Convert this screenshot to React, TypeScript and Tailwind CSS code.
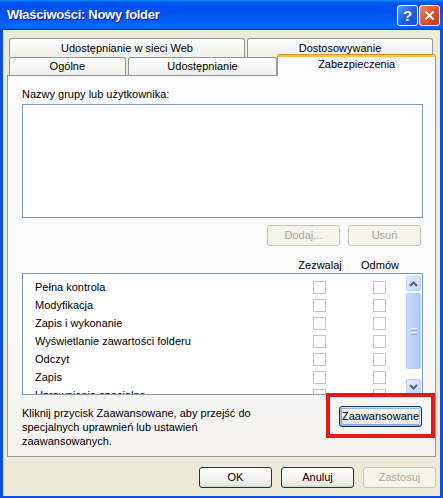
import React from "react";

function Btn({
  children,
  w,
  disabled,
  focused,
}: {
  children: React.ReactNode;
  w: string;
  disabled?: boolean;
  focused?: boolean;
}) {
  if (disabled) {
    return (
      <div
        className={`${w} h-[21px] flex items-center justify-center rounded-[3px] border border-[#c9c7ba] bg-[#f5f4ea] text-[#aca899]`}
      >
        {children}
      </div>
    );
  }
  return (
    <div
      className={`${w} h-[21px] flex items-center justify-center rounded-[3px] border border-[#003c74] bg-[linear-gradient(180deg,#ffffff,#ecebe6_86%,#d6d0c5)] text-black ${
        focused
          ? "shadow-[inset_-1px_1px_#cee7ff,inset_1px_2px_#98b8ea,inset_-2px_2px_#bcd4f6,inset_1px_-1px_#89ade4,inset_2px_-2px_#89ade4]"
          : ""
      }`}
    >
      {children}
    </div>
  );
}

function Check() {
  return <div className="w-[13px] h-[13px] border border-[#c9c7ba] bg-white" />;
}

function Chevron({ up }: { up?: boolean }) {
  return (
    <svg width="9" height="6" viewBox="0 0 9 6">
      <path
        d={up ? "M1 5 L4.5 1.5 L8 5" : "M1 1 L4.5 4.5 L8 1"}
        fill="none"
        stroke="#4d6185"
        strokeWidth="2"
      />
    </svg>
  );
}

const perms = [
  "Pełna kontrola",
  "Modyfikacja",
  "Zapis i wykonanie",
  "Wyświetlanie zawartości folderu",
  "Odczyt",
  "Zapis",
  "Uprawnienia specjalne",
];

export default function App() {
  return (
    <div className="w-[443px] h-[498px] flex flex-col bg-[#0a50dc] font-['Liberation_Sans',Arial,sans-serif] text-[11px] text-black overflow-hidden">
      {/* Title bar */}
      <div className="h-[30px] shrink-0 flex items-center pl-[7px] pr-[3px] bg-[linear-gradient(180deg,#0997ff,#0053ee_8%,#0050ee_40%,#0066ff_88%,#0066ff_93%,#005bff_95%,#003dd7_96%,#003dd7)]">
        <div className="flex-1 text-white font-bold text-[13px] tracking-[-0.3px] [text-shadow:1px_1px_#0f1089]">
          Właściwości: Nowy folder
        </div>
        <div className="flex gap-[1px]">
          <div className="w-[21px] h-[21px] rounded-[3px] border border-white bg-[linear-gradient(135deg,#5a9bff,#2260e0_50%,#1a4fd0)] flex items-center justify-center text-white font-bold text-[15px] leading-none">
            ?
          </div>
          <div className="w-[21px] h-[21px] rounded-[3px] border border-white bg-[linear-gradient(135deg,#f08a60,#e0542c_50%,#c83c14)] flex items-center justify-center">
            <svg width="11" height="11" viewBox="0 0 11 11">
              <path d="M1.5 1.5 L9.5 9.5 M9.5 1.5 L1.5 9.5" stroke="white" strokeWidth="2" />
            </svg>
          </div>
        </div>
      </div>

      {/* Body */}
      <div className="flex-1 mx-[3px] mb-[2px] bg-[#ece9d8] flex flex-col px-[4px] pt-[8px]">
        {/* Tabs row 1 */}
        <div className="flex pl-[2px] gap-[2px] h-[19px]">
          <div className="w-[236px] h-[19px] rounded-t-[3px] border border-b-0 border-[#919b9c] bg-[linear-gradient(180deg,#ffffff,#fafaf9_26%,#f0f0ea_95%,#ecebe6)] flex items-center justify-center">
            Udostępnianie w sieci Web
          </div>
          <div className="w-[186px] h-[19px] rounded-t-[3px] border border-b-0 border-[#919b9c] bg-[linear-gradient(180deg,#ffffff,#fafaf9_26%,#f0f0ea_95%,#ecebe6)] flex items-center justify-center">
            Dostosowywanie
          </div>
        </div>
        {/* Tabs row 2 */}
        <div className="flex items-end pl-[2px] h-[18px]">
          <div className="w-[117px] h-[18px] rounded-t-[3px] border border-b-0 border-[#919b9c] bg-[linear-gradient(180deg,#ffffff,#fafaf9_26%,#f0f0ea_95%,#ecebe6)] flex items-center justify-center">
            Ogólne
          </div>
          <div className="ml-[2px] w-[150px] h-[18px] rounded-t-[3px] border border-b-0 border-[#919b9c] bg-[linear-gradient(180deg,#ffffff,#fafaf9_26%,#f0f0ea_95%,#ecebe6)] flex items-center justify-center">
            Udostępnianie
          </div>
          <div className="relative z-10 w-[159px] h-[22px] -mb-[1px] rounded-t-[3px] border-x border-t border-[#919b9c] border-t-[#e68b2c] bg-[#fcfcfe] flex flex-col">
            <div className="h-[2px] bg-[#ffc73c] shrink-0" />
            <div className="flex-1 flex justify-center pt-[1px] leading-[13px]">Zabezpieczenia</div>
          </div>
        </div>

        {/* Panel */}
        <div className="h-[382px] w-[429px] border border-[#919b9c] bg-[linear-gradient(180deg,#fcfcfe,#fbfbfa_60%,#f4f3ee)] pt-[12px] pl-[14px]">
          <div className="w-[402px] flex flex-col">
            <div className="leading-[13px]">Nazwy grupy lub użytkownika:</div>
            <div className="mt-[3px] h-[114px] w-[401px] border border-[#7f9db9] bg-white" />
            <div className="mt-[7px] flex justify-end gap-[8px] pr-[3px]">
              <Btn w="w-[73px]" disabled>
                Dodaj...
              </Btn>
              <Btn w="w-[73px]" disabled>
                Usuń
              </Btn>
            </div>
            <div className="mt-[13px] h-[13px] leading-[13px] flex pl-[268px]">
              <div className="w-[60px] text-center">Zezwalaj</div>
              <div className="w-[60px] text-center">Odmów</div>
            </div>
            <div className="mt-[1px] h-[122px] w-[401px] border border-[#7f9db9] bg-white flex overflow-hidden">
              <div className="flex-1 pt-[4px] flex flex-col">
                {perms.map((p) => (
                  <div key={p} className="h-[18px] shrink-0 flex items-center">
                    <div className="w-[290px] pl-[12px]">{p}</div>
                    <Check />
                    <div className="ml-[47px]">
                      <Check />
                    </div>
                  </div>
                ))}
              </div>
              <div className="w-[17px] flex flex-col pt-[2px] px-[1px] pb-[0px] gap-[2px] bg-[#fdfdfb]">
                <div className="h-[15px] shrink-0 rounded-[2px] border border-[#bad0fd] bg-[linear-gradient(135deg,#e6eefc,#c1d3fb)] flex items-center justify-center">
                  <Chevron up />
                </div>
                <div className="h-[76px] shrink-0 rounded-[2px] border border-[#b8cdfa] bg-[linear-gradient(90deg,#c9d8fc,#bccffb_50%,#b2c7fa)] flex flex-col items-center justify-center gap-[1px]">
                  <div className="w-[6px] h-[1px] bg-[#eef4fe]" />
                  <div className="w-[6px] h-[1px] bg-[#8cb0f8]" />
                  <div className="w-[6px] h-[1px] bg-[#eef4fe]" />
                  <div className="w-[6px] h-[1px] bg-[#8cb0f8]" />
                </div>
                <div className="flex-1" />
                <div className="h-[15px] shrink-0 rounded-[2px] border border-[#bad0fd] bg-[linear-gradient(135deg,#e6eefc,#c1d3fb)] flex items-center justify-center">
                  <Chevron />
                </div>
              </div>
            </div>
            <div className="mt-[11px] flex justify-between">
              <div className="leading-[14px]">
                Kliknij przycisk Zaawansowane, aby przejść do
                <br />
                specjalnych uprawnień lub ustawień
                <br />
                zaawansowanych.
              </div>
              <div className="relative mr-[2px] h-[21px]">
                <Btn w="w-[83px]" focused>
                  Zaawansowane
                </Btn>
                <div className="absolute -left-[13px] -top-[13px] -right-[13px] -bottom-[11px] border-[4px] border-[#e01b1b] pointer-events-none" />
              </div>
            </div>
          </div>
        </div>

        {/* Bottom buttons */}
        <div className="mt-[10px] flex justify-end gap-[9px]">
          <Btn w="w-[73px]">OK</Btn>
          <Btn w="w-[73px]">Anuluj</Btn>
          <Btn w="w-[73px]" disabled>
            Zastosuj
          </Btn>
        </div>
      </div>
    </div>
  );
}
